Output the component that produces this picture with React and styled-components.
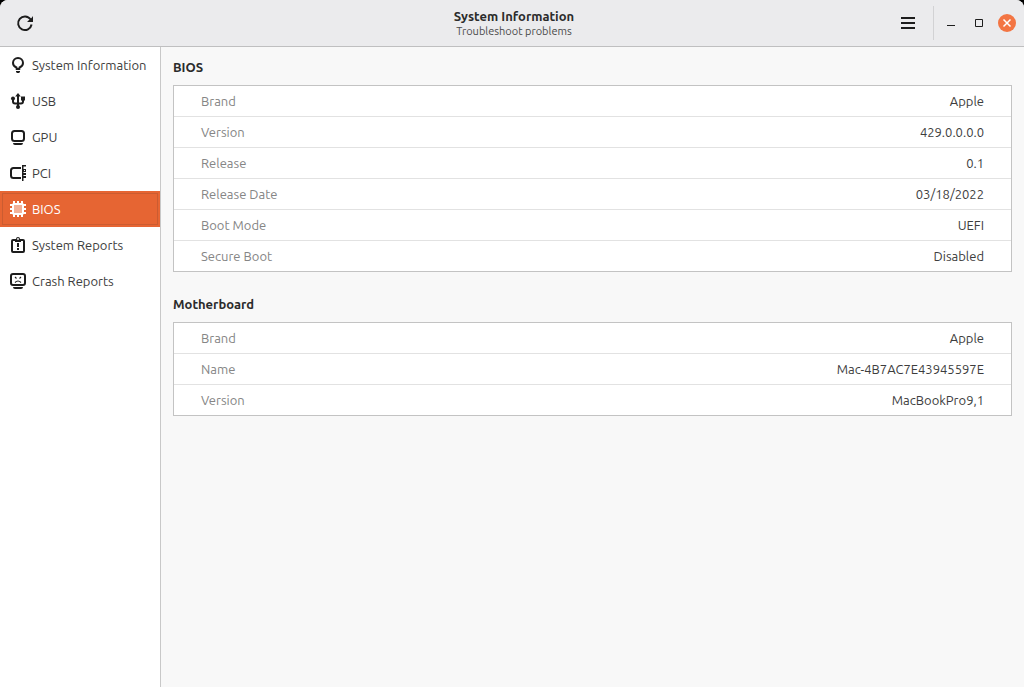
import { useState } from "react";
import styled, { createGlobalStyle } from "styled-components";

const bios = [
  ["Brand", "Apple"],
  ["Version", "429.0.0.0.0"],
  ["Release", "0.1"],
  ["Release Date", "03/18/2022"],
  ["Boot Mode", "UEFI"],
  ["Secure Boot", "Disabled"],
];

const motherboard = [
  ["Brand", "Apple"],
  ["Name", "Mac-4B7AC7E43945597E"],
  ["Version", "MacBookPro9,1"],
];

function BulbIcon() {
  return (
    <Icon>
      <path d="M6.500 12v-1.500C4.500 9.800 3 8.300 3 6a5 5 0 0 1 10 0c0 2.300-1.500 3.800-3.500 4.500V12z" fill="none" stroke="currentColor" strokeWidth="2" strokeLinejoin="round" />
      <path d="M6 14h4v1l-1 1H7l-1-1z" />
    </Icon>
  );
}

function UsbIcon() {
  return (
    <Icon>
      <path d="M8 2v12M3 6v2.500q0 2 2 2h6q2 0 2-2V5" fill="none" stroke="currentColor" strokeWidth="2" />
      <path d="M8 0l2.800 3.500H5.200z" />
      <circle cx="3" cy="5.500" r="2" />
      <path d="M11 3.500h4v4h-4z" />
      <circle cx="8" cy="14" r="2" />
    </Icon>
  );
}

function GpuIcon() {
  return (
    <Icon>
      <rect x="2" y="2" width="12" height="10" rx="2.500" fill="none" stroke="currentColor" strokeWidth="2" />
      <path d="M3 14h10q0 2-2 2H5q-2 0-2-2z" />
    </Icon>
  );
}

function PciIcon() {
  return (
    <Icon>
      <path d="M11 3H3.500Q1 3 1 5.500v5Q1 13 3.500 13H11" fill="none" stroke="currentColor" strokeWidth="2" />
      <path d="M12 0h4v1.500h-2.500V16H12z" />
      <path d="M13 4h3v3h-3zM13 8h3v2h-3zM13 11h3v2h-3z" />
      <path d="M14 5h1v1h-1z" fill="#fff" />
    </Icon>
  );
}

function ChipIcon() {
  return (
    <Icon>
      <rect x="4" y="4" width="8" height="8" opacity="0.5" />
      <rect x="3" y="3" width="10" height="10" rx="1" fill="none" stroke="currentColor" strokeWidth="2" />
      <path d="M3 0h2v3H3zM7 0h2v3H7zM11 0h2v3h-2zM3 13h2v3H3zM7 13h2v3H7zM11 13h2v3h-2zM0 3h3v2H0zM0 7h3v2H0zM0 11h3v2H0zM13 3h3v2h-3zM13 7h3v2h-3zM13 11h3v2h-3z" />
    </Icon>
  );
}

function ReportIcon() {
  return (
    <Icon>
      <rect x="2" y="3" width="12" height="12" rx="1" fill="none" stroke="currentColor" strokeWidth="2" />
      <path d="M5 2h1a2 2 0 0 1 4 0h1v3H5z" />
      <path d="M7 6h2v4H7zM7 11h2v2H7z" />
      <circle cx="8" cy="2" r="0.900" fill="#fff" />
    </Icon>
  );
}

function CrashIcon() {
  return (
    <Icon>
      <rect x="1" y="1" width="14" height="11" rx="2" fill="none" stroke="currentColor" strokeWidth="2" />
      <path d="M3 14h10q0 2-2 2H5q-2 0-2-2z" />
      <path d="M5 4l1.500 1.500M11 4L9.500 5.500M5 9.500Q8 6.500 11 9.500" fill="none" stroke="currentColor" strokeWidth="1.100" />
    </Icon>
  );
}

const pages = [
  { name: "System Information", icon: BulbIcon },
  { name: "USB", icon: UsbIcon },
  { name: "GPU", icon: GpuIcon },
  { name: "PCI", icon: PciIcon },
  { name: "BIOS", icon: ChipIcon },
  { name: "System Reports", icon: ReportIcon },
  { name: "Crash Reports", icon: CrashIcon },
];

function InfoSection({ title, rows }) {
  return (
    <Section>
      <SectionTitle>{title}</SectionTitle>
      <InfoTable aria-label={title}>
        <tbody>
          {rows.map(([label, value]) => (
            <tr key={label}>
              <th scope="row">{label}</th>
              <td>{value}</td>
            </tr>
          ))}
        </tbody>
      </InfoTable>
    </Section>
  );
}

export default function App() {
  const [page, setPage] = useState("BIOS");

  return (
    <Window>
      <GlobalStyle />
      <Header>
        <HeaderButton aria-label="Refresh">
          <Icon $size={18} viewBox="0 0 18 18">
            <path d="M14.500 5.300A6.800 6.800 0 1 0 15.600 10.500" fill="none" stroke="currentColor" strokeWidth="2" />
            <path d="M17 2v6h-6l2.500-2.500L15.500 4z" />
          </Icon>
        </HeaderButton>
        <Titles>
          <h1>System Information</h1>
          <p>Troubleshoot problems</p>
        </Titles>
        <Controls>
          <HeaderButton aria-label="Menu">
            <Icon>
              <path d="M1 2h14v2H1zM1 7h14v2H1zM1 12h14v2H1z" />
            </Icon>
          </HeaderButton>
          <Separator />
          <WindowButton aria-label="Minimize">
            <Icon>
              <path d="M4 10h8v1H4z" />
            </Icon>
          </WindowButton>
          <WindowButton aria-label="Maximize">
            <Icon>
              <path d="M4.500 4.500h7v7h-7z" fill="none" stroke="currentColor" />
            </Icon>
          </WindowButton>
          <WindowButton aria-label="Close">
            <Icon $size={18} viewBox="0 0 18 18">
              <circle cx="9" cy="9" r="9" fill="#f37543" />
              <path d="M5.500 5.500l7 7M12.500 5.500l-7 7" stroke="#fff" strokeWidth="1.500" />
            </Icon>
          </WindowButton>
        </Controls>
      </Header>
      <Body>
        <Sidebar>
          {pages.map(({ name, icon: PageIcon }) => (
            <SidebarItem key={name} $active={name === page} onClick={() => setPage(name)}>
              <PageIcon />
              {name}
            </SidebarItem>
          ))}
        </Sidebar>
        <Content>
          <InfoSection title="BIOS" rows={bios} />
          <InfoSection title="Motherboard" rows={motherboard} />
        </Content>
      </Body>
    </Window>
  );
}

const GlobalStyle = createGlobalStyle`
  * {
    box-sizing: border-box;
  }
  body {
    margin: 0;
    background: #000;
    color: #3d3d3d;
    font-family: Ubuntu, "Noto Sans", sans-serif;
    font-size: 13px;
  }
  h1, h2, p {
    margin: 0;
  }
  button {
    border: none;
    padding: 0;
    background: none;
    color: inherit;
    font: inherit;
  }
`;

const Icon = styled.svg.attrs((props) => ({
  viewBox: props.viewBox || "0 0 16 16",
  fill: "currentColor",
  "aria-hidden": true,
}))`
  display: block;
  flex: none;
  width: ${(props) => props.$size || 16}px;
  height: ${(props) => props.$size || 16}px;
`;

const Window = styled.div`
  display: flex;
  flex-direction: column;
  min-height: 100vh;
  overflow: hidden;
  border-radius: 8px 8px 0 0;
  background: #f8f8f8;
`;

const Header = styled.header`
  display: grid;
  grid-template-columns: 1fr auto 1fr;
  align-items: center;
  height: 47px;
  padding: 0 3px 0 7px;
  border-bottom: 1px solid #bfbfc0;
  background: #ebebed;
  color: #1d1d1d;
`;

const HeaderButton = styled.button`
  display: flex;
  align-items: center;
  justify-content: center;
  width: 36px;
  height: 34px;
`;

const WindowButton = styled(HeaderButton)`
  width: 28px;
`;

const Titles = styled.div`
  text-align: center;

  h1 {
    font-size: 13px;
    line-height: 16px;
    font-weight: 700;
    color: #2b2b2b;
  }
  p {
    font-size: 11px;
    line-height: 14px;
    color: #4a4a4a;
  }
`;

const Controls = styled.div`
  display: flex;
  align-items: center;
  justify-content: flex-end;
`;

const Separator = styled.div`
  width: 1px;
  height: 34px;
  margin: 0 3px 0 7px;
  background: #d2d2d4;
`;

const Body = styled.div`
  display: flex;
  flex: 1;
`;

const Sidebar = styled.nav`
  display: flex;
  flex-direction: column;
  flex: none;
  width: 161px;
  border-right: 1px solid #c8c8c8;
  background: #fff;
`;

const SidebarItem = styled.button`
  display: flex;
  align-items: center;
  gap: 6px;
  height: 36px;
  padding: 0 10px;
  white-space: nowrap;
  color: ${(props) => (props.$active ? "#fff" : "#3d3d3d")};
  background: ${(props) => (props.$active ? "#e66533" : "#fff")};
  outline: ${(props) => (props.$active ? "1px solid #cb5c31" : "none")};
  outline-offset: -3px;

  svg {
    color: ${(props) => (props.$active ? "#fff" : "#1d1d1d")};
  }
`;

const Content = styled.main`
  display: flex;
  flex-direction: column;
  flex: 1;
  gap: 22px;
  padding: 10px 12px;
`;

const Section = styled.section`
  display: flex;
  flex-direction: column;
  gap: 8px;
`;

const SectionTitle = styled.h2`
  font-size: 13px;
  line-height: 20px;
  font-weight: 700;
  color: #2b2b2b;
`;

const InfoTable = styled.table`
  width: 100%;
  border: 1px solid #c3c3c3;
  border-spacing: 0;
  background: #fff;

  th, td {
    height: 31px;
    padding: 0 27px;
    border-bottom: 1px solid #e2e2e2;
    line-height: 20px;
  }
  th {
    text-align: left;
    font-weight: 400;
    color: #858585;
  }
  td {
    text-align: right;
  }
  tr:last-child th, tr:last-child td {
    height: 30px;
    border-bottom: none;
  }
`;
